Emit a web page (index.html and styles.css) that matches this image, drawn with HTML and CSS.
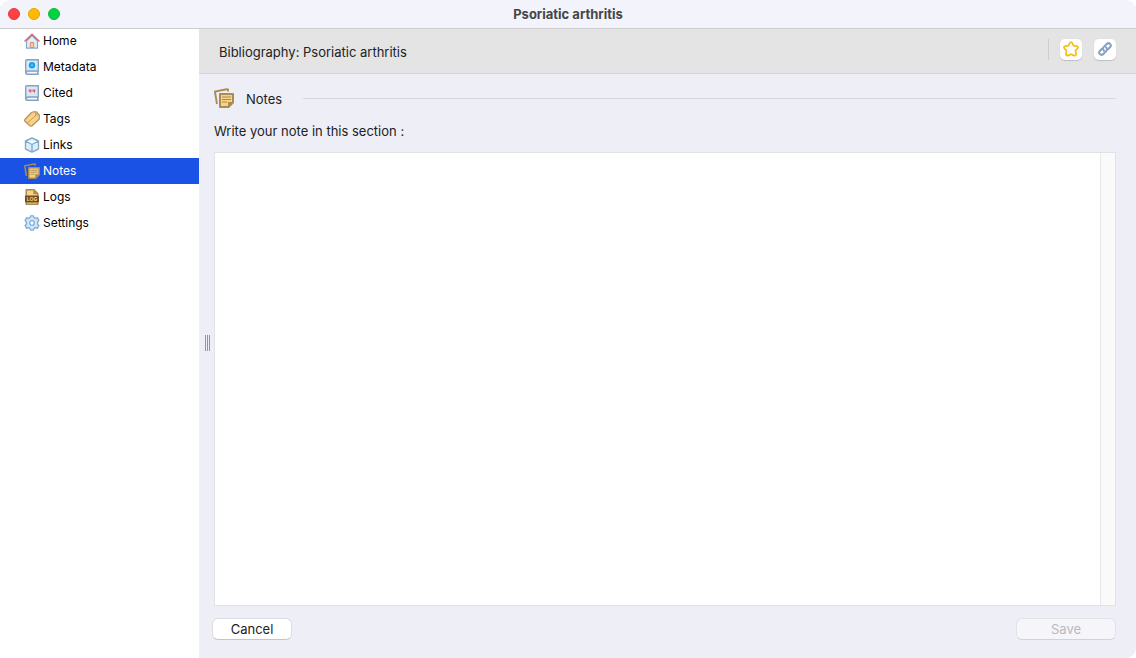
FILE: index.html
```
<!DOCTYPE html>
<html lang="en">
<head>
<meta charset="utf-8">
<title>Psoriatic arthritis</title>
<link rel="stylesheet" href="styles.css">
</head>
<body>
<svg class="defs" width="0" height="0">
	<symbol id="notes" viewBox="0 0 20 20">
		<path d="M3 16 L.9 3.500 L12.500 1.200 L14 1.600 V3.500" fill="none" stroke="#a98c54" stroke-width="1.900"/>
		<path d="M6 6 H19 V14.500 L14.500 19 H6 Z" fill="#fbd284" stroke="#a98c54" stroke-width="2" stroke-linejoin="round"/>
		<path d="M14 19 V14 H19 Z" fill="#a98c54"/>
		<path d="M8 9 H17 M8 11.500 H17 M8 14 H13" stroke="#a98c54" stroke-width="1.100"/>
	</symbol>
	<symbol id="book" viewBox="0 0 16 16">
		<path d="M1.700 14 V2 Q1.700 .8 3 .8 H14.300 V12.200 L13.500 13.700 L14.300 15.200 H3 Q1.700 15.200 1.700 14 Z" fill="#d8e9f6" stroke="#84a3c4" stroke-width="1.400" stroke-linejoin="round"/>
		<path d="M2 13.700 Q2 12 4 12 H14" fill="none" stroke="#84a3c4" stroke-width="1.400"/>
		<path d="M4.500 13.700 H13" stroke="#ffffff"/>
	</symbol>
</svg>
<div class="window">
	<header class="titlebar">
		<div class="lights">
			<button class="light red" aria-label="Close"></button>
			<button class="light yellow" aria-label="Minimize"></button>
			<button class="light green" aria-label="Zoom"></button>
		</div>
		<h1>Psoriatic arthritis</h1>
	</header>
	<div class="panes">
		<nav class="sidebar">
			<a href="#home">
				<svg width="16" height="16" viewBox="0 0 16 16">
					<path d="M2.500 8 V15.200 H13.500 V8 L8 2.500 Z" fill="#e2eff8" stroke="#8ba9c6" stroke-width="1.200"/>
					<path d="M6.300 14.500 V9.500 H9.700 V14.500 Z" fill="#f9cf9f" stroke="#d58d72"/>
					<path d="M.5 8.500 L8 1.200 L15.500 8.500" fill="none" stroke="#d4686e" stroke-width="1.500"/>
				</svg>
				Home
			</a>
			<a href="#metadata">
				<svg width="16" height="16" viewBox="0 0 16 16">
					<use href="#book"/>
					<circle cx="8" cy="6.300" r="3.200" fill="#18a0f2"/>
					<circle cx="8" cy="6.300" r="1" fill="#7cc8f7"/>
				</svg>
				Metadata
			</a>
			<a href="#cited">
				<svg width="16" height="16" viewBox="0 0 16 16">
					<use href="#book"/>
					<path d="M4.700 4.500 H7.500 V6.500 L6.500 8.700 V6.700 H4.700 Z M8.500 4.500 H11.300 V6.500 L10.300 8.700 V6.700 H8.500 Z" fill="#ec5c60"/>
				</svg>
				Cited
			</a>
			<a href="#tags">
				<svg width="16" height="16" viewBox="0 0 16 16">
					<path d="M7.500 1.500 L9.500 .8 H12.500 L15.300 4 V8 L7.800 15 Q7 15.500 6.200 15 L.9 10.300 Q.3 9.500 .9 8.500 Z" fill="#fbd284" stroke="#b5925a" stroke-width="1.200" stroke-linejoin="round"/>
					<path d="M3.500 12 L11.800 4.300 V1" fill="none" stroke="#b5925a" stroke-width=".9"/>
					<circle cx="12.800" cy="4" r=".9" fill="#fff" stroke="#b5925a" stroke-width=".7"/>
				</svg>
				Tags
			</a>
			<a href="#links">
				<svg width="16" height="16" viewBox="0 0 16 16">
					<path d="M8 .8 L14.500 4 V12 L8 15.200 L1.500 12 V4 Z M1.500 4 L8 7.500 L14.500 4 M8 7.500 V15" fill="#dceefb" stroke="#84a9ca" stroke-width="1.400" stroke-linejoin="round"/>
				</svg>
				Links
			</a>
			<a href="#notes-page" class="current">
				<svg width="16" height="16"><use href="#notes"/></svg>
				Notes
			</a>
			<a href="#logs">
				<svg width="16" height="16" viewBox="0 0 16 16">
					<path d="M2.200 .8 H10 L13.800 4.500 V15.200 H2.200 Z" fill="#fbd284" stroke="#a98c54" stroke-width="1.500" stroke-linejoin="round"/>
					<path d="M9.300 .7 V5.200 H13.800 Z" fill="#a98c54"/>
					<rect x="1" y="6.500" width="14" height="7" rx="1" fill="#6b4c24"/>
					<text x="8" y="12" text-anchor="middle" class="log-text">LOG</text>
				</svg>
				Logs
			</a>
			<a href="#settings">
				<svg width="16" height="16" viewBox="0 0 16 16">
					<path d="M6.500 .9 H9.500 L10.200 2.900 L11.300 3.400 L13.300 2.700 L14.900 5.300 L13.600 7 V9 L14.900 10.700 L13.300 13.300 L11.300 12.600 L10.200 13.100 L9.500 15.100 H6.500 L5.800 13.100 L4.700 12.600 L2.700 13.300 L1.100 10.700 L2.400 9 V7 L1.100 5.300 L2.700 2.700 L4.700 3.400 L5.800 2.900 Z" fill="#cfe6f8" stroke="#83abd1" stroke-width="1.300" stroke-linejoin="round"/>
					<circle cx="8" cy="8" r="2.300" fill="#fff" stroke="#83abd1" stroke-width="1.300"/>
				</svg>
				Settings
			</a>
		</nav>
		<main class="main">
			<div class="grip"></div>
			<div class="toolbar">
				<span class="crumb">Bibliography: Psoriatic arthritis</span>
				<div class="tools">
					<button class="tool" aria-label="Favorite">
						<svg width="16" height="16" viewBox="0 0 16 16">
							<path d="M8 1 Q8.800 1 9.300 2.200 L10.500 4.700 L14 5.200 Q15.600 5.800 14.700 7.200 L12.500 9.600 L13 13 Q13 15 11.200 14.600 L8 13.200 L4.800 14.600 Q3 15 3 13 L3.500 9.600 L1.300 7.200 Q.4 5.800 2 5.200 L5.500 4.700 L6.700 2.200 Q7.200 1 8 1 Z" fill="#fff" stroke="#f5bd0c" stroke-width="1.700" stroke-linejoin="round"/>
						</svg>
					</button>
					<button class="tool" aria-label="Copy link">
						<svg width="16" height="16" viewBox="0 0 16 16">
							<g fill="none" stroke="#86a2c0" stroke-width="2" stroke-linecap="round">
								<path d="M7 9.700 Q5 7.700 6.800 5.900 L9.700 3 Q11.400 1.300 13.100 2.900 Q14.700 4.600 13 6.300 L11 8.300"/>
								<path d="M9 6.300 Q11 8.300 9.200 10.100 L6.300 13 Q4.600 14.700 2.900 13.100 Q1.300 11.400 3 9.700 L5 7.700"/>
							</g>
						</svg>
					</button>
				</div>
			</div>
			<form class="content">
				<div class="section">
					<svg width="20" height="20"><use href="#notes"/></svg>
					<h2>Notes</h2>
					<hr>
				</div>
				<label for="note">Write your note in this section :</label>
				<div class="editor">
					<textarea id="note"></textarea>
					<div class="track"></div>
				</div>
				<div class="actions">
					<button type="button" class="btn cancel">Cancel</button>
					<button type="submit" class="btn save" disabled>Save</button>
				</div>
			</form>
		</main>
	</div>
</div>
</body>
</html>
```
FILE: styles.css
```
*
{
	box-sizing:border-box;
}
body
{
	margin:0;
	background:#ffffff;
	font:13px/16px Inter, "Liberation Sans", sans-serif;
	color:#222222;
}
button, textarea
{
	font:inherit;
	border:0;
	padding:0;
}
.defs
{
	position:absolute;
}
.window
{
	display:flex;
	flex-direction:column;
	height:100vh;
	border-radius:10px;
	overflow:hidden;
}
.titlebar
{
	display:grid;
	grid-template-columns:1fr auto 1fr;
	align-items:center;
	height:28px;
	background:#f2f3fb;
	box-shadow:0 1px #cdcdcf;
	z-index:1;
}
.titlebar h1
{
	margin:0;
	font-size:13px;
	font-weight:700;
	color:#464648;
}
.lights
{
	display:flex;
	gap:8px;
	padding-left:8px;
}
.light
{
	width:12px;
	height:12px;
	border-radius:50%;
}
.red
{
	background:#ff4145;
	border:1px solid #e2393e;
}
.yellow
{
	background:#ffb900;
	border:1px solid #e3a403;
}
.green
{
	background:#00d242;
	border:1px solid #0bb93c;
}
.panes
{
	display:flex;
	flex:1;
	min-height:0;
}
.sidebar
{
	width:199px;
	flex:none;
	background:#ffffff;
	font-size:12px;
}
.sidebar a
{
	display:flex;
	align-items:center;
	gap:3px;
	height:26px;
	padding-left:24px;
	color:#000000;
	text-decoration:none;
}
.sidebar a.current
{
	background:#1a52e5;
	color:#ffffff;
}
.log-text
{
	font:bold 5px Inter, sans-serif;
	fill:#fbd284;
}
.main
{
	position:relative;
	display:flex;
	flex-direction:column;
	flex:1;
	background:#edeef6;
}
.grip
{
	position:absolute;
	left:6px;
	top:50%;
	width:5px;
	height:16px;
	margin-top:-8px;
	background:repeating-linear-gradient(to right, #949599 0 1px, transparent 1px 2px);
}
.toolbar
{
	display:flex;
	align-items:center;
	justify-content:space-between;
	height:46px;
	padding:0 20px;
	background:#e4e4e4;
	border-bottom:1px solid #d2d3dc;
}
.crumb
{
	padding-top:3px;
}
.tools
{
	display:flex;
	gap:12px;
	margin-bottom:3px;
	padding-left:11px;
	border-left:1px solid #cecece;
}
.tool
{
	display:flex;
	align-items:center;
	justify-content:center;
	width:22px;
	height:21px;
	border-radius:5px;
	background:#ffffff;
	box-shadow:0 1px 1px #bdbdbd;
}
.content
{
	display:flex;
	flex-direction:column;
	flex:1;
	padding:14px 20px 18px 15px;
}
.section
{
	display:flex;
	align-items:center;
	height:20px;
	margin-bottom:15px;
}
.section h2
{
	margin:2px 21px 0 12px;
	font-size:13px;
	font-weight:400;
}
.section hr
{
	flex:1;
	margin:0;
	border:0;
	border-top:1px solid #d6d7dc;
}
.editor
{
	display:flex;
	flex:1;
	margin:13px 0 12px;
	border:1px solid #e1e2e5;
	background:#ffffff;
}
.editor textarea
{
	flex:1;
	padding:4px;
	background:#ffffff;
	resize:none;
	outline:0;
}
.track
{
	width:15px;
	background:#fafafa;
	border-left:1px solid #e8e8e8;
}
.actions
{
	display:flex;
	justify-content:space-between;
	margin-left:-2px;
}
.btn
{
	height:22px;
	border:1px solid #dcdde2;
	border-bottom-color:#c4c5ca;
	border-radius:6px;
	background:#ffffff;
	color:#222222;
}
.cancel
{
	width:80px;
}
.save
{
	width:100px;
}
.btn:disabled
{
	background:#f6f6fa;
	border-color:#e3e4ea;
	border-bottom-color:#d2d3d9;
	color:#b9b9bd;
}
```
